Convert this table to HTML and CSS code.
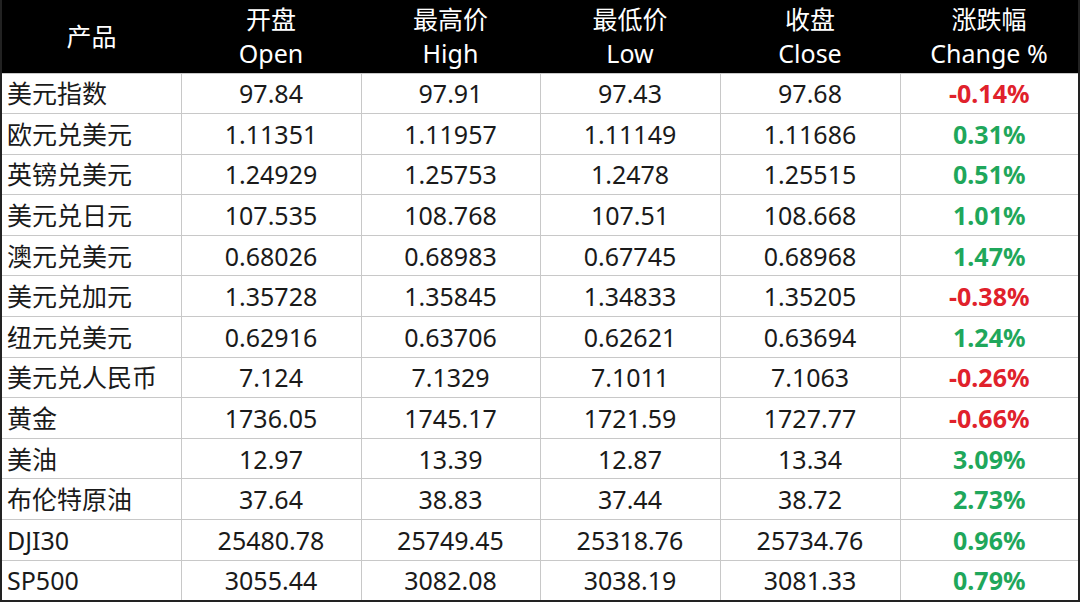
FILE: index.html
```html
<!DOCTYPE html>
<html lang="zh">
<head>
<meta charset="utf-8">
<link rel="stylesheet" href="styles.css">
</head>
<body>
<table class="quotes">
  <colgroup>
    <col class="c1"><col class="c2"><col class="c3"><col class="c4"><col class="c5"><col class="c6">
  </colgroup>
  <thead>
    <tr>
      <th>产品</th>
      <th>开盘<br>Open</th>
      <th>最高价<br>High</th>
      <th>最低价<br>Low</th>
      <th>收盘<br>Close</th>
      <th>涨跌幅<br>Change %</th>
    </tr>
  </thead>
  <tbody>
    <tr><td class="name">美元指数</td><td>97.84</td><td>97.91</td><td>97.43</td><td>97.68</td><td class="chg down">-0.14%</td></tr>
    <tr><td class="name">欧元兑美元</td><td>1.11351</td><td>1.11957</td><td>1.11149</td><td>1.11686</td><td class="chg up">0.31%</td></tr>
    <tr><td class="name">英镑兑美元</td><td>1.24929</td><td>1.25753</td><td>1.2478</td><td>1.25515</td><td class="chg up">0.51%</td></tr>
    <tr><td class="name">美元兑日元</td><td>107.535</td><td>108.768</td><td>107.51</td><td>108.668</td><td class="chg up">1.01%</td></tr>
    <tr><td class="name">澳元兑美元</td><td>0.68026</td><td>0.68983</td><td>0.67745</td><td>0.68968</td><td class="chg up">1.47%</td></tr>
    <tr><td class="name">美元兑加元</td><td>1.35728</td><td>1.35845</td><td>1.34833</td><td>1.35205</td><td class="chg down">-0.38%</td></tr>
    <tr><td class="name">纽元兑美元</td><td>0.62916</td><td>0.63706</td><td>0.62621</td><td>0.63694</td><td class="chg up">1.24%</td></tr>
    <tr><td class="name">美元兑人民币</td><td>7.124</td><td>7.1329</td><td>7.1011</td><td>7.1063</td><td class="chg down">-0.26%</td></tr>
    <tr><td class="name">黄金</td><td>1736.05</td><td>1745.17</td><td>1721.59</td><td>1727.77</td><td class="chg down">-0.66%</td></tr>
    <tr><td class="name">美油</td><td>12.97</td><td>13.39</td><td>12.87</td><td>13.34</td><td class="chg up">3.09%</td></tr>
    <tr><td class="name">布伦特原油</td><td>37.64</td><td>38.83</td><td>37.44</td><td>38.72</td><td class="chg up">2.73%</td></tr>
    <tr><td class="name">DJI30</td><td>25480.78</td><td>25749.45</td><td>25318.76</td><td>25734.76</td><td class="chg up">0.96%</td></tr>
    <tr><td class="name">SP500</td><td>3055.44</td><td>3082.08</td><td>3038.19</td><td>3081.33</td><td class="chg up">0.79%</td></tr>
  </tbody>
</table>
</body>
</html>
```
FILE: styles.css
```css
html, body {
  margin: 0;
  padding: 0;
  background: #ffffff;
}
.quotes {
  width: 1078px;
  table-layout: fixed;
  border-collapse: collapse;
  font-family: "Noto Sans", "Noto Sans CJK SC", sans-serif;
  font-size: 25px;
  color: #1a1a1a;
  border-left: 2px solid #222;
  border-right: 2px solid #222;
  border-bottom: 2px solid #222;
}
.c1 { width: 180px; }
.c2 { width: 180px; }
.c3 { width: 179px; }
.c4 { width: 180px; }
.c5 { width: 180px; }
.c6 { width: 179px; }
.quotes thead tr {
  height: 73px;
  background: #000;
}
.quotes th {
  color: #fff;
  font-weight: normal;
  line-height: 34px;
  padding: 0;
  text-align: center;
  vertical-align: middle;
  border: none;
}
.quotes tbody tr {
  height: 40.6px;
}
.quotes td {
  padding: 0;
  text-align: center;
  vertical-align: middle;
  line-height: 30px;
  border: 1px solid #c8c8c8;
}
.quotes td.name {
  text-align: left;
  padding-left: 5px;
}
.quotes td.chg {
  font-weight: bold;
}
.up { color: #1fa75b; }
.down { color: #e0212b; }
```
